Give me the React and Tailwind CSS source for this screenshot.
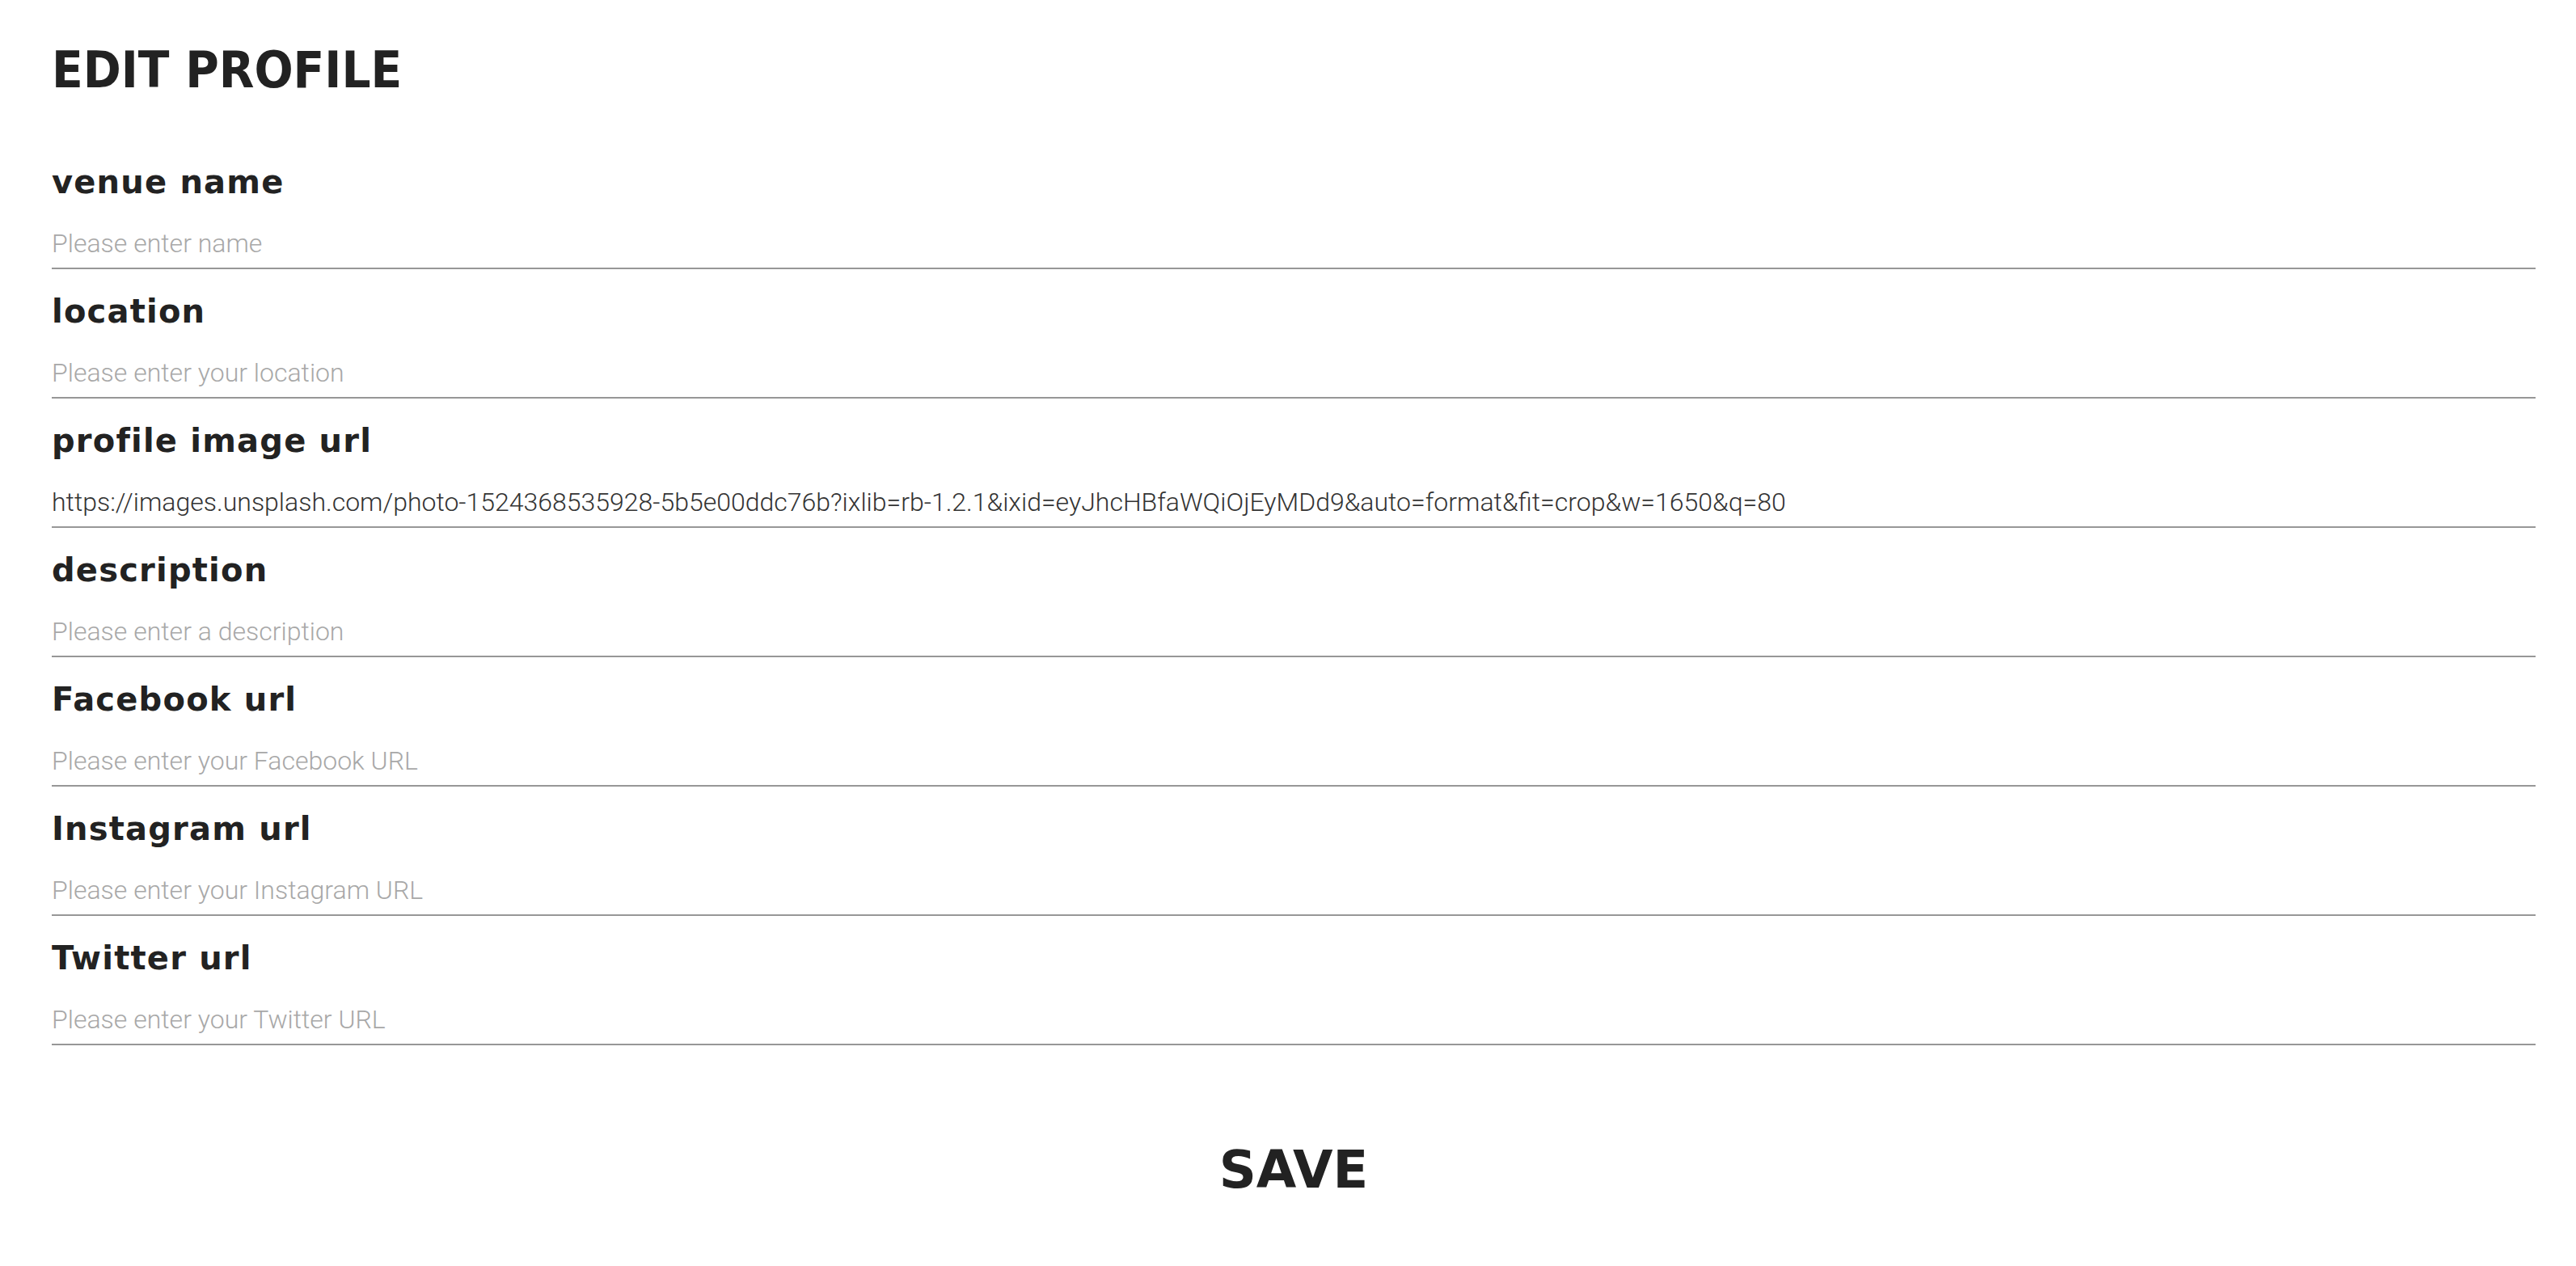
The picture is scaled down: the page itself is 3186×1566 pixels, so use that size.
import React from 'react';

const fields = [
    { label: 'venue name', placeholder: 'Please enter name' },
    { label: 'location', placeholder: 'Please enter your location' },
    {
        label: 'profile image url',
        placeholder: 'Please enter an image url',
        value: 'https://images.unsplash.com/photo-1524368535928-5b5e00ddc76b?ixlib=rb-1.2.1&ixid=eyJhcHBfaWQiOjEyMDd9&auto=format&fit=crop&w=1650&q=80',
    },
    { label: 'description', placeholder: 'Please enter a description' },
    { label: 'Facebook url', placeholder: 'Please enter your Facebook URL' },
    { label: 'Instagram url', placeholder: 'Please enter your Instagram URL' },
    { label: 'Twitter url', placeholder: 'Please enter your Twitter URL' },
];

function Field({ label, placeholder, value }) {
    return (
        <label className="block">
            <span className="block font-['DejaVu_Sans',sans-serif] font-bold text-[40px] leading-[48px] tracking-[1.2px] text-[#222]">
                {label}
            </span>
            <input
                type="text"
                defaultValue={value}
                placeholder={placeholder}
                className="mt-[34px] block w-full bg-transparent pb-[12px] font-['Roboto',sans-serif] font-light text-[32px] leading-[36px] text-[#333] placeholder:text-[#a8a8a8] border-b-2 border-[#979797] outline-none"
            />
        </label>
    );
}

export default function App() {
    return (
        <div className="min-h-screen bg-white pl-[64px] pr-[50px] pt-[55px] pb-[80px]">
            <h1 className="font-['DejaVu_Sans_Condensed','DejaVu_Sans',sans-serif] font-stretch-condensed font-bold text-[63px] leading-[63px] text-[#222]">
                EDIT PROFILE
            </h1>

            <form className="mt-[83px] flex flex-col gap-[28px]" onSubmit={(e) => e.preventDefault()}>
                {fields.map((f) => (
                    <Field key={f.label} {...f} />
                ))}

                <div className="mt-[94px] flex justify-center">
                    <button
                        type="submit"
                        className="font-['DejaVu_Sans',sans-serif] font-bold text-[64px] leading-[64px] text-[#222] bg-transparent cursor-pointer"
                    >
                        SAVE
                    </button>
                </div>
            </form>
        </div>
    );
}
